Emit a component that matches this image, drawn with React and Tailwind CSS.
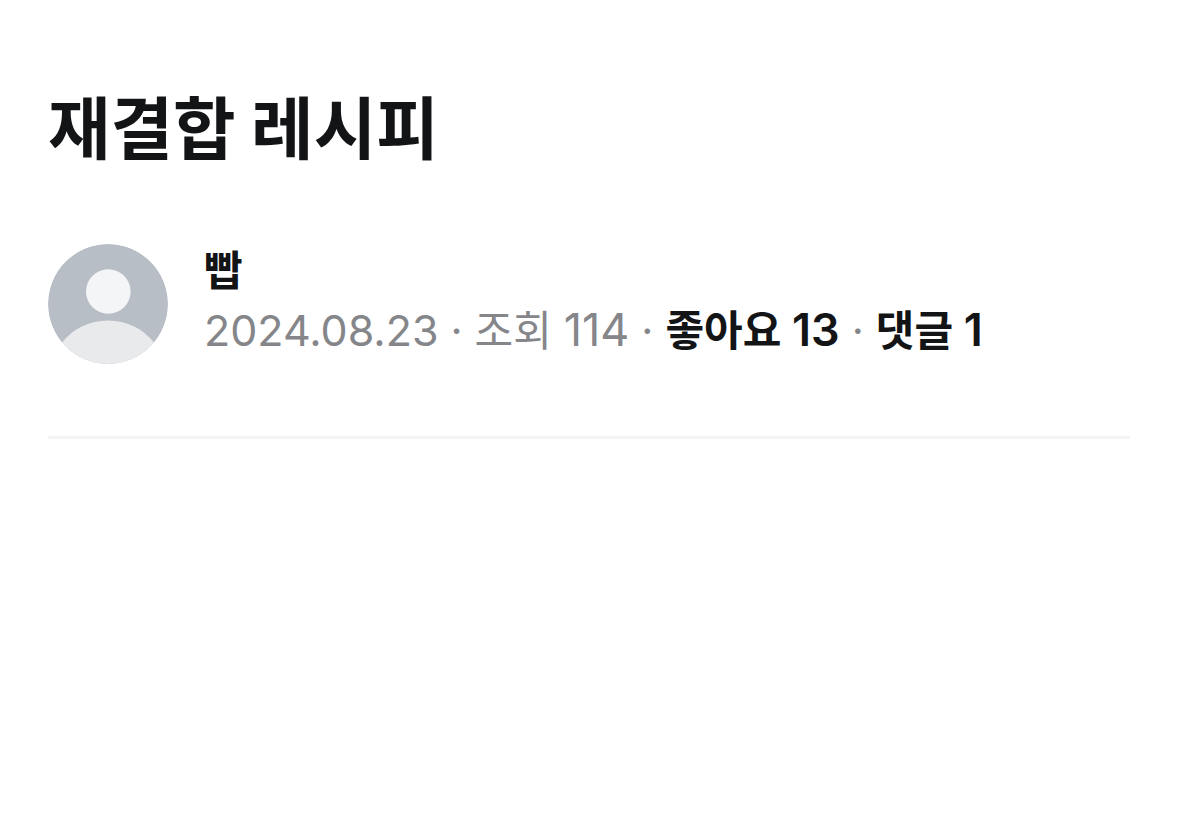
import React from "react";

const post = {
    title: "재결합 레시피",
    author: "빱",
    date: "2024.08.23",
    views: 114,
    likes: 13,
    comments: 1,
};

/* Default profile picture */
const Avatar = () => (
    <svg viewBox="0 0 120 120" className="size-30 shrink-0 rounded-full" aria-hidden="true">
        <circle cx="60" cy="60" r="60" fill="#b8bec6" />
        <circle cx="60.300" cy="47.500" r="22.300" fill="#f4f5f7" />
        <path d="M14 98.500C25 85 41 76.500 60 76.500S95 85 106 98.500A60 60 0 0 1 14 98.500Z" fill="#e9eaec" />
    </svg>
);

const Dot = () => <span className="mx-3">·</span>;

const Count = ({ label, value }) => (
    <>
        {label} <span className="text-[45px]">{value}</span>
    </>
);

export default function App() {
    return (
        <main className="min-h-screen bg-white px-12 pt-20 font-['Inter','Noto_Sans_CJK_KR',sans-serif] text-[#131416]">
            <article className="border-b-3 border-[#f4f4f5] pb-18">
                {/* Title */}
                <h1 className="font-['Noto_Sans_CJK_KR',sans-serif] text-[68px] leading-[90px] font-bold">
                    {post.title}
                </h1>

                {/* Author and stats */}
                <div className="mt-[74px] flex items-start gap-9">
                    <Avatar />
                    <div>
                        <p className="text-[42px] leading-[54px] font-bold">{post.author}</p>
                        <p className="flex items-baseline text-[42px] leading-16 whitespace-nowrap text-[#85868a]">
                            <time dateTime="2024-08-23" className="text-[43px]">
                                {post.date}
                            </time>
                            <Dot />
                            <span>
                                <Count label="조회" value={post.views} />
                            </span>
                            <Dot />
                            <a href="#likes" className="font-semibold text-[#131416]">
                                <Count label="좋아요" value={post.likes} />
                            </a>
                            <Dot />
                            <a href="#comments" className="font-semibold text-[#131416]">
                                <Count label="댓글" value={post.comments} />
                            </a>
                        </p>
                    </div>
                </div>
            </article>
        </main>
    );
}
